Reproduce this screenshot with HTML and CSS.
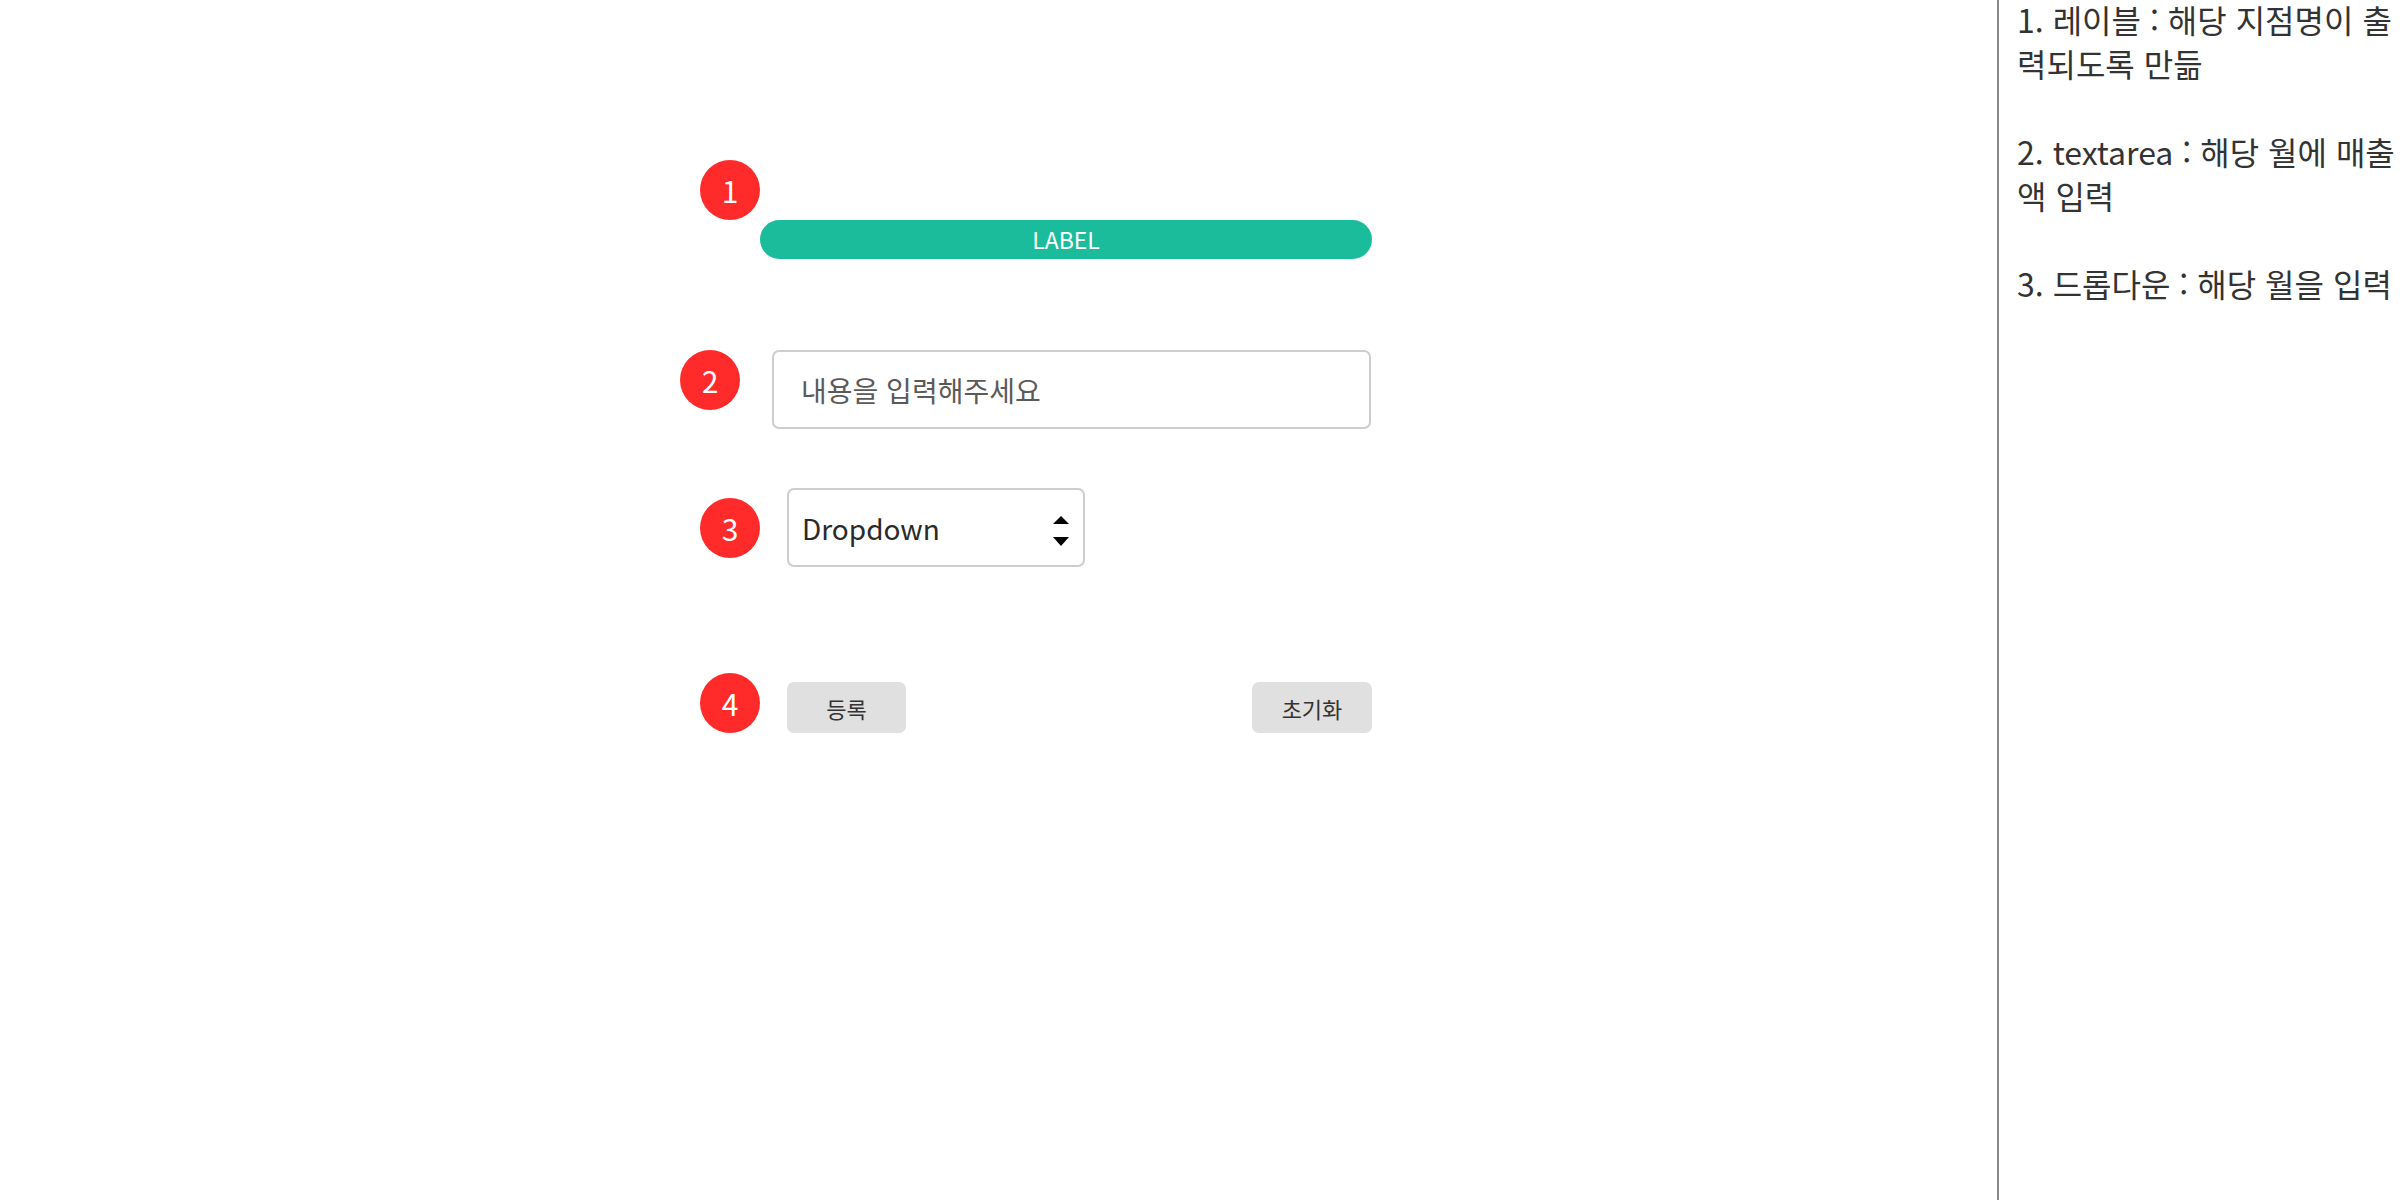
FILE: index.html
```html
<!DOCTYPE html>
<html lang="ko">
<head>
<meta charset="utf-8">
<title>Form</title>
<link rel="stylesheet" href="styles.css">
</head>
<body>
<div class="page">
  <main class="canvas">
    <div class="form">
      <div class="row row-label">
        <span class="badge">1</span>
        <div class="label-bar">LABEL</div>
      </div>
      <div class="row row-input">
        <span class="badge">2</span>
        <input class="text-input" type="text" placeholder="내용을 입력해주세요">
      </div>
      <div class="row row-select">
        <span class="badge">3</span>
        <div class="dropdown">
          <span class="dropdown-text">Dropdown</span>
          <svg class="dropdown-arrows" width="16" height="40" viewBox="0 0 16 40">
            <polygon points="0,16 16,16 8,8" fill="#000"/>
            <polygon points="0,29 16,29 8,38" fill="#000"/>
          </svg>
        </div>
      </div>
      <div class="row row-buttons">
        <span class="badge">4</span>
        <button class="btn">등록</button>
        <button class="btn btn-reset">초기화</button>
      </div>
    </div>
  </main>
  <aside class="notes">
    <p>1. 레이블 : 해당 지점명이 출력되도록 만듦</p>
    <p>2. textarea : 해당 월에 매출액 입력</p>
    <p>3. 드롭다운 : 해당 월을 입력</p>
  </aside>
</div>
</body>
</html>
```
FILE: styles.css
```css
* { box-sizing: border-box; }

html, body {
  margin: 0;
  padding: 0;
  background: #fff;
}

body {
  font-family: "Noto Sans CJK KR", "Noto Sans", sans-serif;
  color: #333;
  overflow: hidden;
}

.page {
  display: flex;
  height: 1200px;
  width: 2400px;
}

.canvas {
  width: 1997px;
  flex: none;
}

.form {
  width: 672px;
  margin-left: 700px;
  padding-top: 160px;
  display: flex;
  flex-direction: column;
}

.row {
  display: flex;
}

.badge {
  width: 60px;
  height: 60px;
  flex: none;
  border-radius: 50%;
  background: #ff2b2b;
  color: #fff;
  font-size: 30px;
  line-height: 60px;
  text-align: center;
}

.row-label {
  align-items: flex-start;
}

.label-bar {
  flex: 1;
  margin-top: 60px;
  height: 39px;
  border-radius: 20px;
  background: #1abc9c;
  color: #fff;
  font-size: 23px;
  line-height: 39px;
  text-align: center;
}

.row-input {
  margin-top: 91px;
  margin-left: -20px;
  align-items: flex-start;
  gap: 32px;
}

.text-input {
  flex: 1;
  height: 79px;
  margin-right: 1px;
  border: 2px solid #cdcdcd;
  border-radius: 7px;
  padding: 0 0 0 27px;
  font-family: inherit;
  font-size: 28px;
  color: #333;
  outline: none;
}

.text-input::placeholder {
  color: #5a5a5a;
}

.row-select {
  margin-top: 59px;
  align-items: center;
  gap: 27px;
}

.dropdown {
  width: 298px;
  height: 79px;
  border: 2px solid #cdcdcd;
  border-radius: 7px;
  display: flex;
  align-items: center;
  justify-content: space-between;
  padding: 0 14px 0 13px;
}

.dropdown-text {
  font-size: 28px;
  color: #2a2a2a;
}

.dropdown-arrows {
  display: block;
}

.row-buttons {
  margin-top: 106px;
  align-items: flex-end;
  gap: 27px;
}

.btn {
  width: 119px;
  height: 51px;
  border: none;
  border-radius: 7px;
  background: #e0e0e0;
  color: #333;
  font-family: inherit;
  font-size: 22px;
  padding: 0;
}

.btn-reset {
  width: 120px;
  margin-left: auto;
}

.notes {
  flex: 1;
  border-left: 2px solid #888;
  padding-left: 18px;
  font-size: 32px;
  line-height: 44px;
  color: #333;
}

.notes p {
  margin: 0 0 44px;
}

.notes p:first-child {
  margin-top: -3px;
}
```
